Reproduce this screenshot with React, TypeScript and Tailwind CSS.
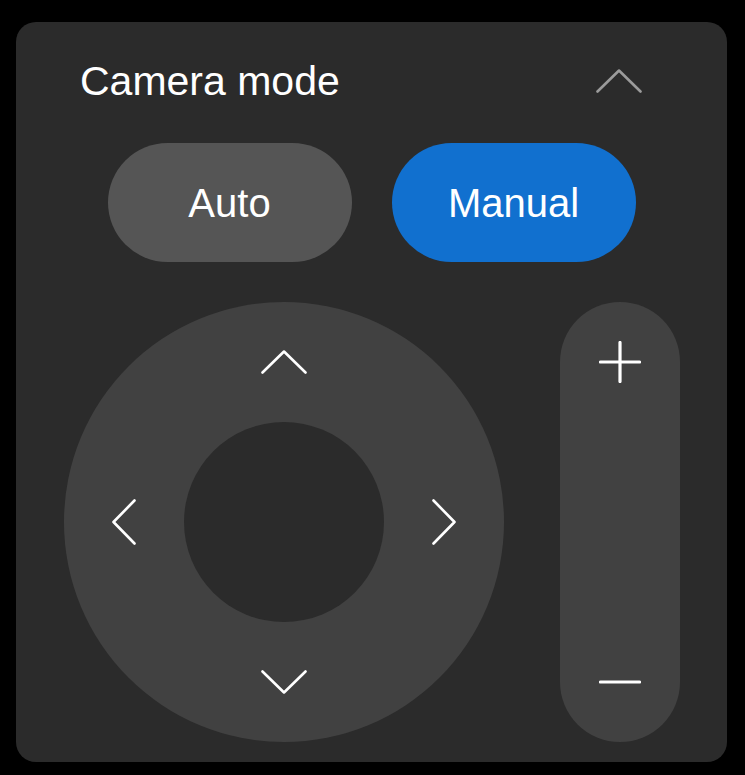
import React from 'react';

function Chevron({ dir, className }: { dir: 'up' | 'down' | 'left' | 'right'; className?: string }) {
  const horizontal = dir === 'up' || dir === 'down';
  const paths = {
    up: 'M1.5 22.5 L23 1.5 L44.5 22.5',
    down: 'M1.5 1.5 L23 22.5 L44.5 1.5',
    left: 'M22.5 1.5 L1.5 23 L22.5 44.5',
    right: 'M1.5 1.5 L22.5 23 L1.5 44.5',
  };
  return (
    <svg
      width={horizontal ? 46 : 24}
      height={horizontal ? 24 : 46}
      viewBox={horizontal ? '0 0 46 24' : '0 0 24 46'}
      fill="none"
      stroke="currentColor"
      strokeWidth={2.6}
      strokeLinecap="round"
      strokeLinejoin="round"
      className={className}
    >
      <path d={paths[dir]} />
    </svg>
  );
}

export default function App() {
  return (
    <div className="min-h-[775px] w-[745px] bg-black pt-[22px] pl-[16px] font-['Liberation_Sans',Arial,sans-serif]">
      <div className="w-[711px] h-[740px] rounded-[20px] bg-[#2b2b2b] pt-[35px]">
        {/* Header */}
        <div className="flex h-[48px] items-center justify-between pl-[64px] pr-[85px]">
          <span className="text-[41px] leading-none text-white">Camera mode</span>
          <Chevron dir="up" className="text-[#9b9b9b]" />
        </div>

        {/* Mode buttons */}
        <div className="mt-[38px] flex justify-center gap-[40px]">
          <button className="h-[119px] w-[244px] rounded-full bg-[#555555] text-[40px] text-white">
            Auto
          </button>
          <button className="h-[119px] w-[244px] rounded-full bg-[#1170cf] text-[40px] text-white">
            Manual
          </button>
        </div>

        {/* Pan/tilt and zoom */}
        <div className="mt-[40px] flex justify-center gap-[56px]">
          <div className="grid h-[440px] w-[440px] grid-cols-[120px_200px_120px] grid-rows-[120px_200px_120px] rounded-full bg-[#414141] text-white">
            <div />
            <div className="flex items-center justify-center">
              <Chevron dir="up" />
            </div>
            <div />
            <div className="flex items-center justify-center">
              <Chevron dir="left" />
            </div>
            <div className="rounded-full bg-[#2b2b2b]" />
            <div className="flex items-center justify-center">
              <Chevron dir="right" />
            </div>
            <div />
            <div className="flex items-center justify-center">
              <Chevron dir="down" />
            </div>
            <div />
          </div>

          <div className="flex h-[440px] w-[120px] flex-col justify-between rounded-full bg-[#414141] text-white">
            <div className="flex h-[120px] items-center justify-center">
              <svg width="42" height="42" viewBox="0 0 42 42" stroke="currentColor" strokeWidth={3.2} strokeLinecap="round">
                <path d="M21 1.5 V40.5 M1.5 21 H40.5" />
              </svg>
            </div>
            <div className="flex h-[120px] items-center justify-center">
              <svg width="42" height="42" viewBox="0 0 42 42" stroke="currentColor" strokeWidth={3.2} strokeLinecap="round">
                <path d="M1.5 21 H40.5" />
              </svg>
            </div>
          </div>
        </div>
      </div>
    </div>
  );
}
